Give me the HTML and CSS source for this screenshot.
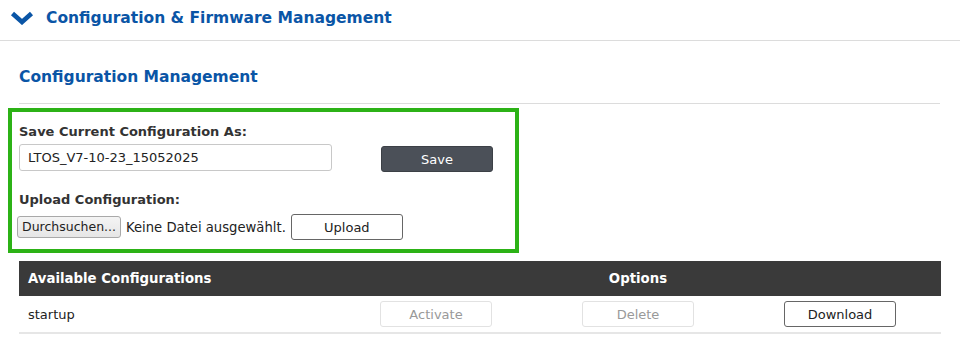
FILE: index.html
```html
<!DOCTYPE html>
<html lang="de">
<head>
<meta charset="utf-8">
<link rel="stylesheet" href="styles.css">
</head>
<body>
<div class="section-header">
  <svg class="chevron" width="24" height="14" viewBox="0 0 24 14"><path d="M2.5 2.5 L12 11 L21.5 2.5" fill="none" stroke="#0a55a6" stroke-width="4.6" stroke-linecap="butt" stroke-linejoin="miter"/></svg>
  <span class="section-title">Configuration &amp; Firmware Management</span>
</div>
<div class="content">
  <h2 class="sub-title">Configuration Management</h2>
  <div class="highlight">
    <div class="label">Save Current Configuration As:</div>
    <div class="save-row">
      <input class="text-input" type="text" value="LTOS_V7-10-23_15052025">
      <button class="btn btn-dark">Save</button>
    </div>
    <div class="label label-upload">Upload Configuration:</div>
    <div class="upload-row">
      <span class="file-btn">Durchsuchen...</span>
      <span class="file-text">Keine Datei ausgewählt.</span>
      <button class="btn btn-light">Upload</button>
    </div>
  </div>
  <table class="config-table">
    <colgroup>
      <col class="c-name"><col class="c-opt"><col class="c-opt"><col class="c-opt">
    </colgroup>
    <thead>
      <tr><th>Available Configurations</th><th colspan="3" class="col-opts">Options</th></tr>
    </thead>
    <tbody>
      <tr>
        <td>startup</td>
        <td class="col-btn"><button class="btn btn-disabled">Activate</button></td>
        <td class="col-btn"><button class="btn btn-disabled">Delete</button></td>
        <td class="col-btn"><button class="btn btn-light">Download</button></td>
      </tr>
    </tbody>
  </table>
</div>
</body>
</html>
```

FILE: styles.css
```css
* { box-sizing: border-box; }
body {
  margin: 0;
  background: #fff;
  font-family: "DejaVu Sans", Verdana, sans-serif;
  color: #222;
}
.section-header {
  height: 41px;
  border-bottom: 1px solid #dcdcdc;
  display: flex;
  align-items: center;
  padding-left: 10px;
  padding-bottom: 5px;
}
.chevron { display: block; margin-right: 12px; }
.section-title {
  font-weight: bold;
  font-size: 15.5px;
  color: #0a55a6;
}
.content { padding: 0 20px 0 19px; }
.sub-title {
  margin: 0;
  padding-top: 27px;
  height: 63px;
  font-size: 15.5px;
  font-weight: bold;
  color: #0a55a6;
  border-bottom: 1px solid #dcdcdc;
}
.highlight {
  margin-left: -11px;
  margin-top: 4px;
  width: 511px;
  height: 145px;
  border: 4px solid #2cb216;
  padding: 9px 0 0 7px;
}
.label {
  font-weight: bold;
  font-size: 13px;
  color: #333;
  height: 22px;
  line-height: 22px;
}
.save-row { display: flex; align-items: flex-start; margin-top: 1px; }
.text-input {
  width: 313px;
  height: 27px;
  border: 1px solid #c8c8c8;
  border-radius: 3px;
  padding: 0 8px;
  font-family: "DejaVu Sans", Verdana, sans-serif;
  font-size: 13px;
  color: #222;
}
.btn {
  width: 112px;
  height: 26px;
  border-radius: 3px;
  font-family: "DejaVu Sans", Verdana, sans-serif;
  font-size: 13px;
  padding: 0;
}
.btn-dark {
  background: #4b5058;
  border: 1px solid #3c4046;
  color: #fff;
  margin-left: 49px;
  margin-top: 2px;
}
.label-upload { margin-top: 17px; }
.upload-row { display: flex; align-items: center; margin-left: -2px; margin-top: 3px; }
.file-btn {
  display: inline-block;
  height: 22px;
  line-height: 20px;
  padding: 0 4px;
  border: 1px solid #a9a9a9;
  border-radius: 3px;
  background: linear-gradient(#f4f4f4, #e6e6e6);
  font-size: 12.5px;
  color: #222;
}
.file-text { font-size: 13.2px; margin-left: 5px; margin-right: 5px; color: #222; }
.btn-light {
  background: #fff;
  border: 1px solid #666;
  color: #222;
}
.config-table {
  width: 100%;
  border-collapse: collapse;
  table-layout: fixed;
  margin-top: 8px;
}
.c-name { width: 316px; }
.c-opt { width: 202px; }
.config-table th {
  background: #3a3a3a;
  color: #fff;
  font-weight: bold;
  font-size: 13.3px;
  height: 35px;
  text-align: left;
  padding: 0 9px;
}
.config-table th.col-opts { text-align: center; }
.config-table td {
  height: 37px;
  border-bottom: 2px solid #e6e6e6;
  font-size: 13px;
  padding: 0 9px;
}
.config-table td.col-btn { text-align: center; padding: 0; }
.btn-disabled {
  background: #fff;
  border: 1px solid #e2e2e2;
  color: #999;
}
```
